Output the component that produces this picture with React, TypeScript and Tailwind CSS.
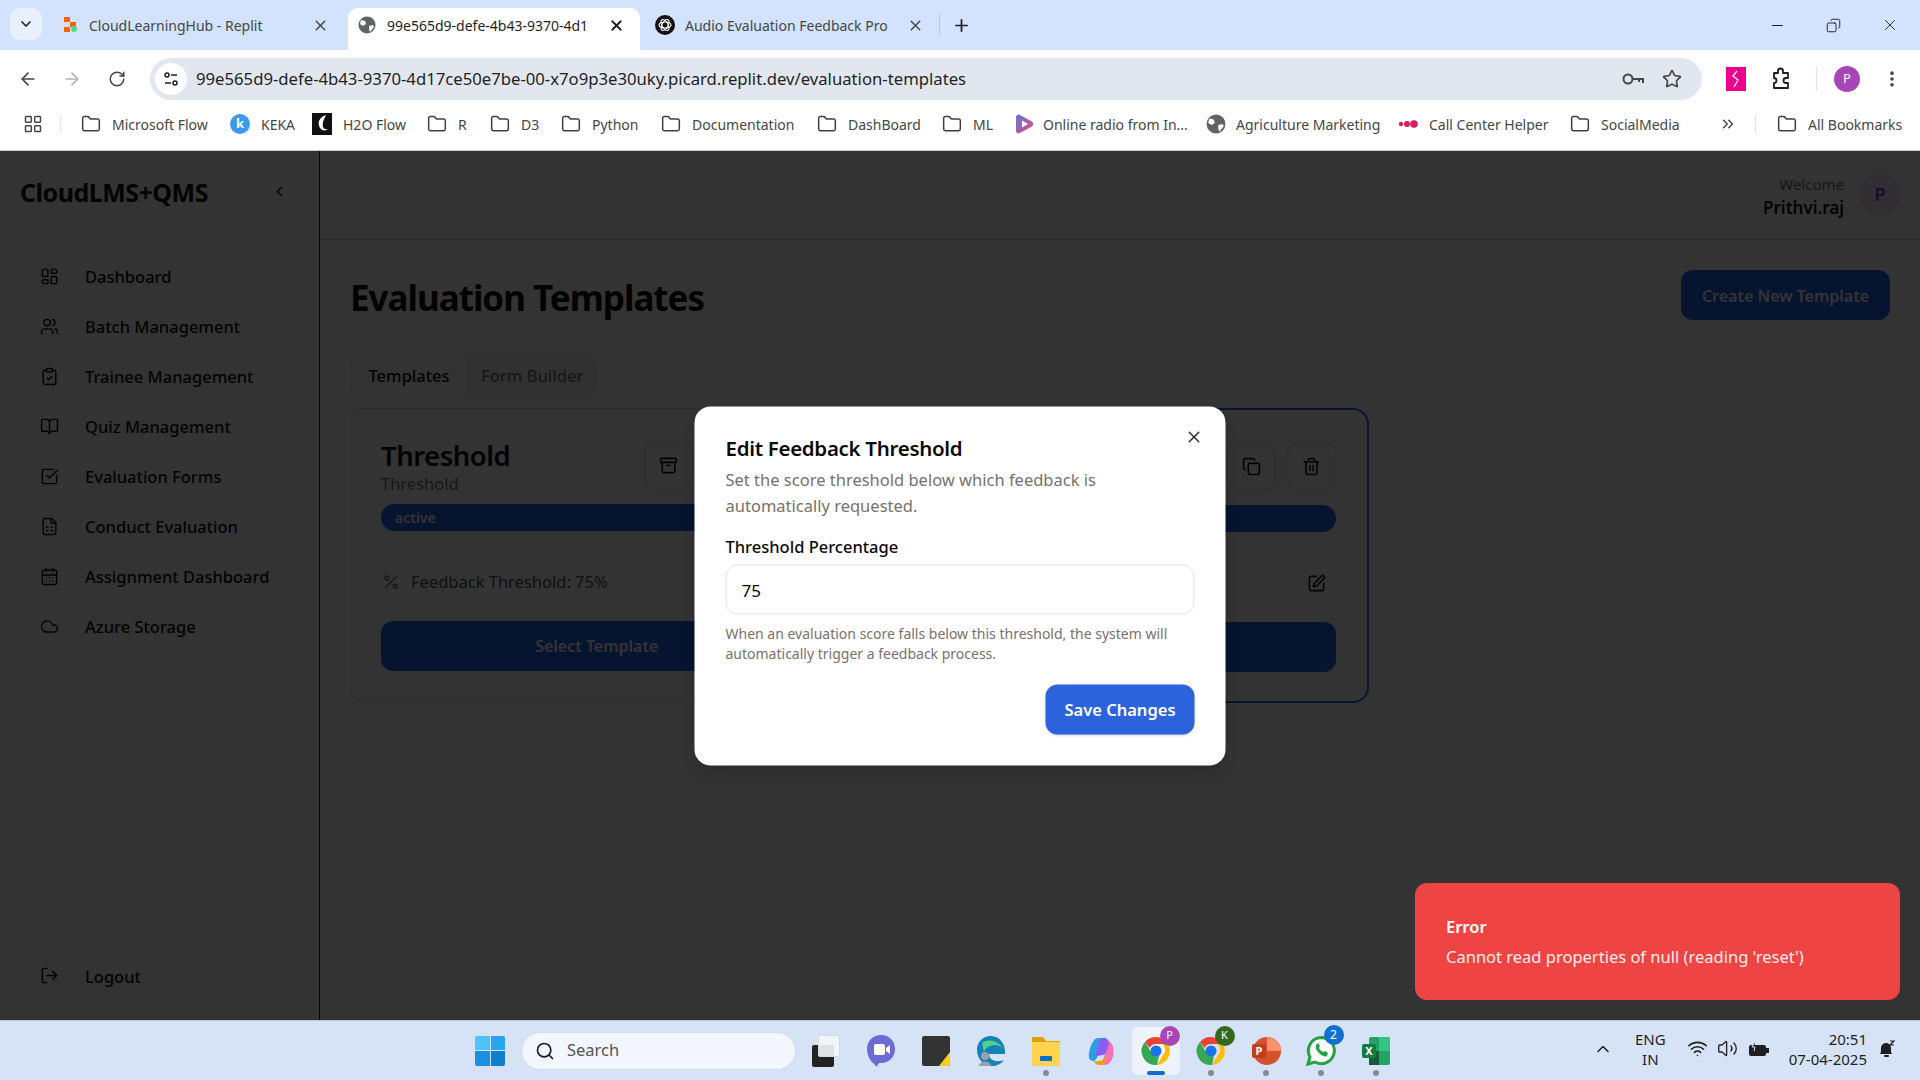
import {
  Archive,
  ArrowLeft,
  ArrowRight,
  BookOpen,
  CalendarDays,
  ChevronDown,
  ChevronLeft,
  ChevronUp,
  ChevronsRight,
  ClipboardCheck,
  Cloud,
  Copy,
  EllipsisVertical,
  FileSpreadsheet,
  Folder,
  LayoutDashboard,
  LayoutGrid,
  LogOut,
  Minus,
  Percent,
  Plus,
  RotateCw,
  Search,
  SquareCheckBig,
  SquarePen,
  Star,
  Trash2,
  Users,
  Volume2,
  Wifi,
  X,
} from "lucide-react";

const navItems = [
  { icon: LayoutDashboard, label: "Dashboard" },
  { icon: Users, label: "Batch Management" },
  { icon: ClipboardCheck, label: "Trainee Management" },
  { icon: BookOpen, label: "Quiz Management" },
  { icon: SquareCheckBig, label: "Evaluation Forms" },
  { icon: FileSpreadsheet, label: "Conduct Evaluation" },
  { icon: CalendarDays, label: "Assignment Dashboard" },
  { icon: Cloud, label: "Azure Storage" },
];

function GlobeIcon({ size = 18 }: { size?: number }) {
  return (
    <svg width={size} height={size} viewBox="0 0 18 18" className="shrink-0">
      <circle cx="9" cy="9" r="8.5" fill="#5f6368" />
      <path d="M3 4l4 1 1 3-3 2-3-2zM11 10l4-1 1 2-4 5-1-3z" fill="#ffffff" />
    </svg>
  );
}

function ReplitIcon() {
  return (
    <svg width="18" height="18" viewBox="0 0 18 18" className="shrink-0">
      <rect x="2" y="1" width="6" height="5" fill="#f26207" />
      <rect x="8" y="6" width="6" height="5" fill="#f26207" />
      <rect x="2" y="11" width="6" height="5" fill="#f26207" />
      <circle cx="12" cy="13" r="3" fill="#4ade80" />
    </svg>
  );
}

function GptIcon() {
  return (
    <svg width="20" height="20" viewBox="0 0 20 20" className="shrink-0">
      <circle cx="10" cy="10" r="10" fill="#111111" />
      <g fill="none" stroke="#ffffff" strokeWidth="1.2">
        <ellipse cx="10" cy="10" rx="6" ry="3" />
        <ellipse cx="10" cy="10" rx="6" ry="3" transform="rotate(60 10 10)" />
        <ellipse cx="10" cy="10" rx="6" ry="3" transform="rotate(120 10 10)" />
      </g>
    </svg>
  );
}

function FolderIcon() {
  return <Folder size={20} strokeWidth={1.8} className="text-[#3c4043] shrink-0" />;
}

function KekaIcon() {
  return (
    <div className="w-5 h-5 rounded-full bg-[#3b9bea] text-white text-[13px] font-bold flex items-center justify-center shrink-0">
      k
    </div>
  );
}

function H2oIcon() {
  return (
    <svg width="20" height="22" viewBox="0 0 20 22" className="shrink-0">
      <rect width="20" height="22" fill="#111111" />
      <path d="M14 2C7 4 5 10 8 15c2 3 6 3 8 1-4 1-6-2-5-6 0-3 2-5 3-8z" fill="#ffffff" />
    </svg>
  );
}

function RadioIcon() {
  return (
    <svg width="20" height="20" viewBox="0 0 20 20" className="shrink-0">
      <defs>
        <linearGradient id="radio" x1="0" y1="0" x2="1" y2="1">
          <stop offset="0" stopColor="#5b7bd5" />
          <stop offset="1" stopColor="#e8487f" />
        </linearGradient>
      </defs>
      <path d="M2 3c0-2 2-3 4-2l11 6c3 2 3 4 0 6L6 19c-2 1-4 0-4-2z" fill="url(#radio)" />
      <path d="M8 6.5l6 3.5-6 3.5z" fill="#ffffff" />
    </svg>
  );
}

function CallCenterIcon() {
  return (
    <svg width="20" height="10" viewBox="0 0 20 10" className="shrink-0">
      <circle cx="3" cy="5" r="2.2" fill="#d81b60" />
      <circle cx="9" cy="5" r="3" fill="#d81b60" />
      <circle cx="16" cy="5" r="3.8" fill="#d81b60" />
    </svg>
  );
}

const bookmarks = [
  { icon: <FolderIcon />, label: "Microsoft Flow", w: "w-[149px]", gap: "gap-[11px]" },
  { icon: <KekaIcon />, label: "KEKA", w: "w-[82px]", gap: "gap-[11px]" },
  { icon: <H2oIcon />, label: "H2O Flow", w: "w-[115px]", gap: "gap-[11px]" },
  { icon: <FolderIcon />, label: "R", w: "w-[63px]", gap: "gap-[11px]" },
  { icon: <FolderIcon />, label: "D3", w: "w-[71px]", gap: "gap-[11px]" },
  { icon: <FolderIcon />, label: "Python", w: "w-[100px]", gap: "gap-[11px]" },
  { icon: <FolderIcon />, label: "Documentation", w: "w-[156px]", gap: "gap-[11px]" },
  { icon: <FolderIcon />, label: "DashBoard", w: "w-[125px]", gap: "gap-[11px]" },
  { icon: <FolderIcon />, label: "ML", w: "w-[72px]", gap: "gap-[11px]" },
  { icon: <RadioIcon />, label: "Online radio from In...", w: "w-[192px]", gap: "gap-[9px]" },
  { icon: <GlobeIcon size={20} />, label: "Agriculture Marketing", w: "w-[192px]", gap: "gap-[10px]" },
  { icon: <CallCenterIcon />, label: "Call Center Helper", w: "w-[172px]", gap: "gap-[11px]" },
  { icon: <FolderIcon />, label: "SocialMedia", w: "w-[136px]", gap: "gap-[11px]" },
];

function TabStrip() {
  return (
    <div className="h-[50px] bg-[#d3e3fd] flex items-end pl-[10px] shrink-0">
      <div className="w-[32px] h-[32px] mb-[10px] rounded-[10px] bg-[#e8f0fe] flex items-center justify-center">
        <ChevronDown size={16} strokeWidth={2.5} className="text-[#1f1f1f]" />
      </div>
      <div className="w-[306px] h-[42px] pb-[8px] pl-[20px] pr-[19px] flex items-center gap-[9px] text-[#444746]">
        <ReplitIcon />
        <span className="flex-1 text-[14px]">CloudLearningHub - Replit</span>
        <X size={17} strokeWidth={2} />
      </div>
      <div className="w-[292px] h-[42px] pb-[8px] bg-white rounded-t-[10px] pl-[10px] pr-[15px] flex items-center text-[#1f1f1f]">
        <GlobeIcon />
        <span className="flex-1 ml-[11px] text-[14px] whitespace-nowrap">99e565d9-defe-4b43-9370-4d1</span>
        <X size={17} strokeWidth={2.5} className="ml-[8px]" />
      </div>
      <div className="w-[299px] h-[42px] pb-[8px] pl-[15px] pr-[15px] flex items-center text-[#444746]">
        <GptIcon />
        <span className="flex-1 ml-[10px] text-[14px] whitespace-nowrap">Audio Evaluation Feedback Pro</span>
        <X size={17} strokeWidth={2} className="ml-[8px]" />
      </div>
      <div className="w-px h-[20px] mb-[15px] bg-[#a8c7fa]" />
      <Plus size={19} strokeWidth={2.2} className="ml-[12px] mb-[15px] text-[#1f1f1f]" />
      <div className="ml-auto flex items-center gap-[40px] pr-[21px] mb-[16px] text-[#1f1f1f]">
        <Minus size={17} strokeWidth={1.5} />
        <Copy size={15} strokeWidth={1.5} className="-scale-x-100" />
        <X size={18} strokeWidth={1.2} />
      </div>
    </div>
  );
}

function Toolbar() {
  return (
    <div className="h-[58px] bg-white rounded-t-[10px] flex items-center pl-[18px] shrink-0">
      <ArrowLeft size={20} className="text-[#444746]" />
      <ArrowRight size={20} className="ml-[24px] text-[#b0b3b8]" />
      <RotateCw size={18} className="ml-[26px] text-[#444746]" />
      <div className="ml-[24px] w-[1552px] h-[42px] rounded-full bg-[#e2e7ef] flex items-center pl-[5px] pr-[20px]">
        <div className="w-[32px] h-[32px] rounded-full bg-white flex items-center justify-center">
          <svg width="16" height="16" viewBox="0 0 16 16" fill="none" stroke="#1f1f1f" strokeWidth="1.5">
            <circle cx="4" cy="4" r="2" />
            <path d="M8 4h6M2 12h6" />
            <circle cx="12" cy="12" r="2" />
          </svg>
        </div>
        <span className="ml-[9px] text-[16.7px] text-[#1f1f1f]">
          99e565d9-defe-4b43-9370-4d17ce50e7be-00-x7o9p3e30uky.picard.replit.dev/evaluation-templates
        </span>
        <div className="ml-auto flex items-center gap-[18px] text-[#444746]">
          <svg width="22" height="14" viewBox="0 0 22 14" fill="none" stroke="#444746" strokeWidth="2">
            <circle cx="6" cy="7" r="4.5" />
            <path d="M11 7h10v4M17 7v3" />
          </svg>
          <Star size={20} strokeWidth={2} />
        </div>
      </div>
      <div className="ml-[24px] w-[20px] h-[24px] bg-[#ec008c] flex items-center justify-center">
        <svg width="10" height="18" viewBox="0 0 10 18" fill="none" stroke="#ffffff" strokeWidth="1.3">
          <path d="M6 1L2 6l5 4-4 7" />
        </svg>
      </div>
      <svg width="20" height="24" viewBox="0 0 20 24" fill="none" stroke="#1f1f1f" strokeWidth="1.8" className="ml-[25px]">
        <path d="M3 6h4V4a2.5 2.5 0 0 1 5 0v2h5v5h-2a2.5 2.5 0 0 0 0 5h2v5H3v-5a2.5 2.5 0 0 0 0-5z" strokeLinejoin="round" />
      </svg>
      <div className="ml-[25px] w-px h-[24px] bg-[#d3e3fd]" />
      <div className="ml-[17px] w-[26px] h-[26px] rounded-full bg-[#a846b8] text-white text-[13px] flex items-center justify-center">
        P
      </div>
      <EllipsisVertical size={20} strokeWidth={2.4} className="ml-[22px] text-[#444746]" />
    </div>
  );
}

function BookmarksBar() {
  return (
    <div className="h-[43px] pb-[10px] bg-white flex items-center pl-[23px] text-[14px] text-[#444746] border-b border-[#c7c7c7] shrink-0">
      <LayoutGrid size={20} strokeWidth={1.8} className="text-[#444746]" />
      <div className="ml-[17px] mr-[20px] w-px h-[20px] bg-[#d3e3fd]" />
      {bookmarks.map((b) => (
        <div key={b.label} className={`flex items-center whitespace-nowrap ${b.gap} ${b.w}`}>
          {b.icon}
          <span>{b.label}</span>
        </div>
      ))}
      <ChevronsRight size={18} className="ml-[13px]" />
      <div className="ml-[18px] mr-[21px] w-px h-[20px] bg-[#d3e3fd]" />
      <div className="flex items-center gap-[11px] whitespace-nowrap">
        <FolderIcon />
        <span>All Bookmarks</span>
      </div>
    </div>
  );
}

function Sidebar() {
  return (
    <aside className="w-[320px] border-r border-stone-900 flex flex-col px-[20px] pb-[18px] shrink-0">
      <div className="h-[84px] flex items-center justify-between">
        <span className="text-[25px] font-bold text-stone-950 tracking-[-0.5px]">CloudLMS+QMS</span>
        <div className="w-[40px] h-[40px] rounded-lg flex items-center justify-center -mt-[4px]">
          <ChevronLeft size={17} className="text-stone-950" />
        </div>
      </div>
      <nav className="flex flex-col pt-[18px]">
        {navItems.map((item) => (
          <a key={item.label} className="h-[50px] pl-[20px] flex items-center gap-[26px] text-[16.5px] font-medium text-stone-950 border-b border-stone-100 rounded-xl">
            <item.icon size={19} strokeWidth={1.8} className="-mt-[3px] shrink-0" />
            {item.label}
          </a>
        ))}
      </nav>
      <a className="mt-auto h-[50px] pl-[20px] flex items-center gap-[26px] text-[16.5px] font-medium text-stone-950">
        <LogOut size={19} strokeWidth={1.8} className="-mt-[3px] shrink-0" />
        Logout
      </a>
    </aside>
  );
}

function IconButton({ children }: { children: React.ReactNode }) {
  return (
    <div className="w-[49px] h-[49px] rounded-xl border border-stone-200 flex items-center justify-center text-stone-950">
      {children}
    </div>
  );
}

function TemplateCard({ selected }: { selected?: boolean }) {
  return (
    <div className={`rounded-2xl pt-[29px] ${selected ? "border-2 border-[#2563eb] px-[31px]" : "border border-stone-200 px-[30px]"}`}>
      <div className="flex justify-between">
        <div>
          <div className="text-[27.5px] leading-[36px] font-semibold text-stone-950 tracking-[-0.5px]">Threshold</div>
          <div className="text-[16.5px] leading-[22px] text-stone-500 -mt-[1px]">Threshold</div>
        </div>
        <div className="flex gap-[11px] mt-[3px]">
          <IconButton>
            <Archive size={19} />
          </IconButton>
          <IconButton>
            <Copy size={19} />
          </IconButton>
          <IconButton>
            <Trash2 size={19} />
          </IconButton>
        </div>
      </div>
      <div className="mt-[9px] h-[27px] rounded-full bg-[#2563eb] px-[14px] flex items-center text-[14px] font-semibold text-white">
        active
      </div>
      <div className="mt-[29px] h-[44px] flex items-center text-[16.5px] text-stone-600">
        <Percent size={18} className="ml-[1px] mr-[11px] text-stone-500" />
        Feedback Threshold: 75%
        <div className="ml-auto w-[40px] h-[40px] flex items-center justify-center text-stone-950">
          <SquarePen size={19} />
        </div>
      </div>
      <div className="mt-[17px] h-[50px] rounded-xl bg-[#2563eb] flex items-center justify-center text-[16px] font-semibold text-white">
        Select Template
      </div>
    </div>
  );
}

function MainContent() {
  return (
    <main className="flex-1 flex flex-col">
      <header className="h-[89px] border-b border-stone-200 flex items-center justify-end pr-[20px] gap-[16px]">
        <div className="text-right pt-[3px]">
          <div className="text-[15px] leading-[22px] text-stone-500">Welcome</div>
          <div className="text-[17px] leading-[26px] font-semibold text-stone-950">Prithvi.raj</div>
        </div>
        <div className="w-[40px] h-[40px] rounded-full bg-purple-100 text-[#7c3aed] flex items-center justify-center text-[18px] font-semibold -mt-[2px]">
          P
        </div>
      </header>
      <div className="pl-[30px] pr-[30px]">
        <div className="flex items-center justify-between pt-[30px]">
          <h1 className="text-[35px] leading-[44px] font-bold text-stone-950 tracking-[-1px] mt-[6px]">Evaluation Templates</h1>
          <button className="w-[209px] h-[50px] pt-[1px] rounded-xl bg-[#2563eb] text-[16px] font-semibold text-white">
            Create New Template
          </button>
        </div>
        <div className="mt-[34px] w-[247px] h-[44px] rounded-xl bg-stone-100 flex items-center p-[2px] text-[16.5px] font-medium">
          <div className="w-[114px] h-[40px] rounded-lg bg-white text-stone-950 flex items-center justify-center">Templates</div>
          <div className="pl-[15px] text-stone-500">Form Builder</div>
        </div>
        <div className="mt-[10px] w-[1019px] h-[295px] grid grid-cols-2 gap-[32px]">
          <TemplateCard />
          <TemplateCard selected />
        </div>
      </div>
    </main>
  );
}

function ThresholdDialog() {
  return (
    <div className="absolute left-1/2 top-1/2 -translate-x-1/2 -translate-y-1/2 w-[531px] h-[359px] bg-white rounded-2xl px-[31px] pt-[25px] shadow-lg">
      <X size={19} strokeWidth={1.8} className="absolute top-[21px] right-[22px] text-stone-800" />
      <h2 className="text-[20.5px] leading-[32px] font-semibold text-stone-950 tracking-[-0.3px]">Edit Feedback Threshold</h2>
      <p className="text-[16.5px] leading-[26px] text-stone-500 mt-[3px]">
        Set the score threshold below which feedback is
        <br />
        automatically requested.
      </p>
      <div className="mt-[16px] text-[16.5px] leading-[24px] font-medium text-stone-950">Threshold Percentage</div>
      <div className="mt-[6px] h-[50px] rounded-xl border border-stone-200 flex items-center pl-[15px] pt-[2px] text-[17px] text-stone-950">75</div>
      <p className="mt-[9px] text-[14px] leading-[20px] text-stone-500">
        When an evaluation score falls below this threshold, the system will
        <br />
        automatically trigger a feedback process.
      </p>
      <div className="mt-[21px] flex justify-end">
        <button className="w-[149px] h-[50px] pt-[2px] rounded-xl bg-[#2a63dc] text-[16.5px] font-semibold text-white shadow-sm">
          Save Changes
        </button>
      </div>
    </div>
  );
}

function ErrorToast() {
  return (
    <div className="absolute right-[20px] bottom-[20px] w-[485px] h-[117px] rounded-xl bg-[#ef4444] px-[31px] flex flex-col justify-center text-white">
      <div className="text-[16.5px] leading-[24px] font-semibold">Error</div>
      <div className="text-[16.5px] leading-[24px] mt-[6px] opacity-90">Cannot read properties of null (reading &apos;reset&apos;)</div>
    </div>
  );
}

function TaskSlot({ children, dot, active }: { children: React.ReactNode; dot?: boolean; active?: boolean }) {
  return (
    <div className={`relative w-[48px] h-[48px] mx-[3.5px] rounded-md flex items-center justify-center ${active ? "bg-[#eef3fc]" : ""}`}>
      {children}
      {dot && <div className="absolute bottom-[-1px] left-1/2 -translate-x-1/2 w-[6px] h-[6px] rounded-full bg-[#858a92]" />}
      {active && <div className="absolute bottom-0 left-1/2 -translate-x-1/2 w-[18px] h-[4px] rounded-full bg-[#0f6cce]" />}
    </div>
  );
}

function ChromeLogo({ badge, badgeColor }: { badge: string; badgeColor: string }) {
  return (
    <div className="relative w-[30px] h-[30px]">
      <svg width="30" height="30" viewBox="0 0 30 30">
        <path d="M15 1a14 14 0 0 1 12 7H15a7 7 0 0 0-6.5 4L4 6a14 14 0 0 1 11-5z" fill="#ea4335" />
        <path d="M27 8a14 14 0 0 1-11 21l6-10a7 7 0 0 0-1-11z" fill="#fbbc04" />
        <path d="M16 29A14 14 0 0 1 4 6l6 10a7 7 0 0 0 8 4z" fill="#34a853" />
        <circle cx="15" cy="15" r="5.5" fill="#1a73e8" />
      </svg>
      <div className={`absolute -top-[10px] -right-[9px] w-[20px] h-[20px] rounded-full text-[11px] flex items-center justify-center text-white ${badgeColor}`}>
        {badge}
      </div>
    </div>
  );
}

function Taskbar() {
  return (
    <div className="h-[60px] bg-[#d6e3f7] border-t border-[#b9c3d2] flex items-center relative shrink-0">
      <div className="ml-[475px] w-[30px] h-[30px] grid grid-cols-2 gap-[1px]">
        <div className="bg-[#4fc3f7] rounded-tl-[2px]" />
        <div className="bg-[#29a5ee] rounded-tr-[2px]" />
        <div className="bg-[#1a90e0] rounded-bl-[2px]" />
        <div className="bg-[#0f7dd0] rounded-br-[2px]" />
      </div>
      <div className="ml-[16px] w-[275px] h-[38px] rounded-full bg-[#f3f6fd] border border-[#d5dce8] flex items-center pl-[13px] text-[16.5px] text-[#555]">
        <Search size={20} strokeWidth={2} className="text-[#1f1f1f]" />
        <span className="ml-[12px]">Search</span>
      </div>
      <div className="ml-[2px] flex items-center">
        <TaskSlot>
          <div className="relative w-[28px] h-[32px]">
            <div className="absolute left-0 bottom-0 w-[22px] h-[22px] rounded-[2px] bg-[#222]" />
            <div className="absolute right-0 top-0 w-[22px] h-[22px] rounded-[2px] bg-[#f4f6f9]/90 border border-[#d5d8dd]" />
          </div>
        </TaskSlot>
        <TaskSlot>
          <svg width="30" height="34" viewBox="0 0 30 34">
            <path d="M15 1c8 0 14 6 14 14s-6 14-14 14c-2 0-3 0-4 4l-5-5C3 25 1 20 1 15 1 7 7 1 15 1z" fill="#6f6bd6" />
            <rect x="8" y="10" width="11" height="11" rx="2" fill="#ffffff" />
            <path d="M20 14l4-3v9l-4-3z" fill="#ffffff" />
          </svg>
        </TaskSlot>
        <TaskSlot>
          <svg width="28" height="30" viewBox="0 0 28 30">
            <rect width="28" height="30" rx="2" fill="#333333" />
            <path d="M17 30l11-14v12a2 2 0 0 1-2 2z" fill="#f9ce1d" />
          </svg>
        </TaskSlot>
        <TaskSlot>
          <svg width="30" height="32" viewBox="0 0 30 32">
            <path d="M15 1C7 1 1 7 1 15c0 9 7 16 15 16 5 0 9-2 12-6-8 3-15 0-15-6h16c1-9-5-18-14-18z" fill="#1481ba" />
            <path d="M6 8c4-4 16-4 21 6-3-4-8-5-13-3-3 1-5 3-6 6-1-3-1-6-2-9z" fill="#4fd28a" />
            <circle cx="9" cy="21" r="4" fill="#9aa0a6" />
            <path d="M3 31c0-6 12-6 12 0z" fill="#9aa0a6" />
          </svg>
        </TaskSlot>
        <TaskSlot dot>
          <svg width="30" height="30" viewBox="0 0 30 30">
            <path d="M1 1h11l3 4h14v6H1z" fill="#e0a100" />
            <rect x="1" y="6" width="28" height="24" rx="1" fill="#ffd34e" />
            <rect x="9" y="20" width="12" height="5" rx="1" fill="#0a6fc9" />
          </svg>
        </TaskSlot>
        <TaskSlot>
          <svg width="30" height="30" viewBox="0 0 30 30">
            <path d="M12 2c-5 0-8 9-9 15-1 5 1 8 4 8 4 0 5-6 7-12 1-5 3-9 7-11z" fill="#2b9fe6" />
            <path d="M18 2c-5 0-6 8-7 12l-2 7c3-1 10-3 13-3 4-6 2-16-4-16z" fill="#8b5cf6" />
            <path d="M23 5c5 3 6 12 3 18-2 5-5 6-9 6H9c5 0 7-3 9-8 2-5 5-10 5-16z" fill="#f472b6" />
            <path d="M7 25c4 1 11 0 13-5 1 4-1 9-6 9-3 0-5-2-7-4z" fill="#f59e0b" />
          </svg>
        </TaskSlot>
        <TaskSlot active>
          <ChromeLogo badge="P" badgeColor="bg-[#a846b8]" />
        </TaskSlot>
        <TaskSlot dot>
          <ChromeLogo badge="K" badgeColor="bg-[#33691e]" />
        </TaskSlot>
        <TaskSlot dot>
          <svg width="30" height="30" viewBox="0 0 30 30">
            <circle cx="16" cy="15" r="14" fill="#d35230" />
            <path d="M16 1a14 14 0 0 1 14 14H16z" fill="#ff8f6b" />
            <rect x="1" y="8" width="14" height="14" rx="2" fill="#c43e1c" />
            <text x="8" y="19" fontSize="11" fontWeight="700" textAnchor="middle" fill="#ffffff" fontFamily="Noto Sans">P</text>
          </svg>
        </TaskSlot>
        <TaskSlot dot>
          <div className="relative">
            <svg width="32" height="32" viewBox="0 0 32 32" fill="none">
              <path d="M3 29l2-7a13 13 0 1 1 5 5z" stroke="#25a244" strokeWidth="3" fill="#ffffff" />
              <path d="M11 10c-1 2 0 5 3 8s6 4 8 3l1-3-3-2-2 1c-2-1-3-2-4-4l1-2-2-3z" fill="#25a244" />
            </svg>
            <div className="absolute -top-[10px] -right-[7px] w-[20px] h-[20px] rounded-full bg-[#0f6fd4] text-white text-[12px] flex items-center justify-center">
              2
            </div>
          </div>
        </TaskSlot>
        <TaskSlot dot>
          <svg width="30" height="30" viewBox="0 0 30 30">
            <rect x="8" y="1" width="21" height="28" rx="2" fill="#21a366" />
            <rect x="18" y="1" width="11" height="14" fill="#33c481" />
            <rect x="8" y="15" width="10" height="14" fill="#185c37" />
            <rect x="1" y="8" width="14" height="14" rx="2" fill="#107c41" />
            <text x="8" y="19" fontSize="11" fontWeight="700" textAnchor="middle" fill="#ffffff" fontFamily="Noto Sans">X</text>
          </svg>
        </TaskSlot>
      </div>
      <div className="absolute right-[24px] top-0 h-full pb-[4px] flex items-center text-[#1f1f1f]">
        <ChevronUp size={20} strokeWidth={1.8} />
        <div className="ml-[22px] text-[15px] leading-[20px] text-center">
          ENG
          <br />
          IN
        </div>
        <Wifi size={21} strokeWidth={1.8} className="ml-[21px]" />
        <Volume2 size={21} strokeWidth={1.5} className="ml-[9px]" />
        <svg width="21" height="16" viewBox="0 0 21 16" className="ml-[10px]">
          <rect x="1" y="4" width="17" height="11" rx="2" fill="#1f1f1f" />
          <rect x="18" y="7" width="3" height="5" fill="#1f1f1f" />
          <path d="M7 0l-3 6h3l-1 4" stroke="#d6e3f7" strokeWidth="1" fill="#1f1f1f" />
        </svg>
        <div className="ml-[20px] text-[15px] leading-[20px] text-right">
          20:51
          <br />
          07-04-2025
        </div>
        <svg width="18" height="20" viewBox="0 0 18 20" className="ml-[11px]">
          <path d="M2 15c1-1 1-3 1-6a5 5 0 0 1 10 0c0 3 0 5 1 6z" fill="#1f1f1f" />
          <rect x="6" y="16" width="5" height="2" rx="1" fill="#1f1f1f" />
          <path d="M12 2h4l-4 4h4" stroke="#1f1f1f" strokeWidth="1.2" fill="none" />
        </svg>
      </div>
    </div>
  );
}

export default function App() {
  return (
    <div className="w-[1920px] h-[1080px] flex flex-col overflow-hidden font-['Noto_Sans',sans-serif]">
      <TabStrip />
      <Toolbar />
      <BookmarksBar />
      <div className="relative flex-1 flex min-h-0 bg-white">
        <Sidebar />
        <MainContent />
        <div className="absolute inset-0 bg-black/80" />
        <ThresholdDialog />
        <ErrorToast />
      </div>
      <Taskbar />
    </div>
  );
}
